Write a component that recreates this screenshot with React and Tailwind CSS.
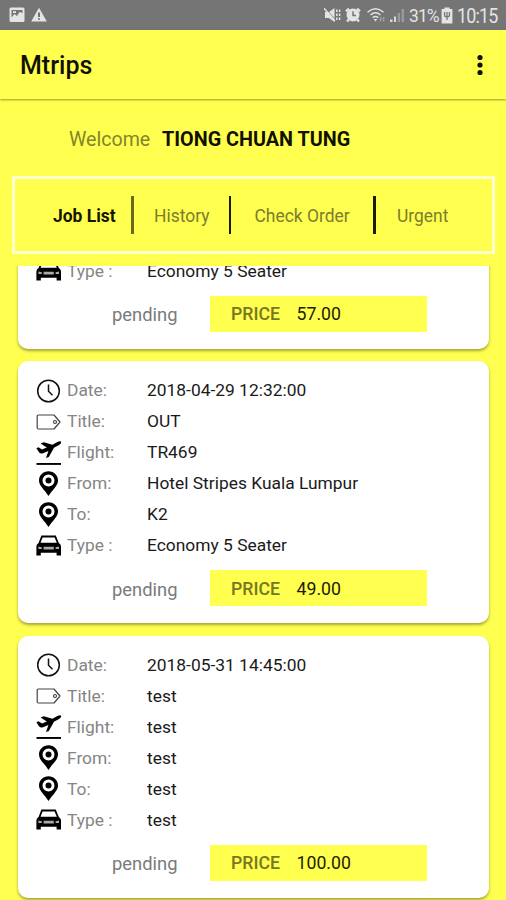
// src/App.jsx
import React from "react";

const jobs = [
  {
    id: 1,
    type: "Economy 5 Seater",
    price: "57.00",
  },
  {
    id: 2,
    date: "2018-04-29 12:32:00",
    title: "OUT",
    flight: "TR469",
    from: "Hotel Stripes Kuala Lumpur",
    to: "K2",
    type: "Economy 5 Seater",
    price: "49.00",
  },
  {
    id: 3,
    date: "2018-05-31 14:45:00",
    title: "test",
    flight: "test",
    from: "test",
    to: "test",
    type: "test",
    price: "100.00",
  },
];

function ClockIcon() {
  return (
    <svg width="26" height="26" viewBox="0 0 26 26" fill="none" stroke="#111" strokeWidth="1.5">
      <circle cx="12.5" cy="13" r="10.8" />
      <path d="M12.5 6.5V13.2l4 4" />
    </svg>
  );
}

function TagIcon() {
  return (
    <svg width="26" height="26" viewBox="0 0 26 26" fill="none" stroke="#444" strokeWidth="1.2">
      <path d="M2.4 6H18L24 13L18 20H2.4Q1.2 20 1.2 18.8V7.2Q1.2 6 2.4 6Z" strokeLinejoin="round" />
      <circle cx="19" cy="13" r="1.5" />
    </svg>
  );
}

function PlaneIcon() {
  return (
    <svg width="26" height="26" viewBox="0 0 26 26" fill="#000">
      <path d="M.4 8.2L2.4 7.2L6 9.6L10.8 7.6L4.6 3.4L7.8 2.2L16.4 4.8L21.4 2Q24.4 .6 25.2 1.8Q25.5 3.6 23 5L18 7.8L12.8 17L10 18L12.4 11L7 13.2Q4.5 14 3.2 12.4Z" />
      <rect x=".5" y="23" width="24.5" height="1.9" />
    </svg>
  );
}

function PinIcon() {
  return (
    <svg width="26" height="26" viewBox="0 0 26 26" fill="#000">
      <path
        fillRule="evenodd"
        d="M12.5 .2C7.2 .2 3 4.2 3 9.4C3 15 8.4 18.2 12.5 25C16.6 18.2 22 15 22 9.4C22 4.2 17.8 .2 12.5 .2ZM12.5 3.6A6 6 0 1 1 12.5 15.6A6 6 0 1 1 12.5 3.6Z"
      />
      <circle cx="12.5" cy="9.6" r="3" />
    </svg>
  );
}

function CarIcon() {
  return (
    <svg width="26" height="26" viewBox="0 0 26 26">
      <path d="M5.4 2.6H19.8L22.8 10Q25 11 25 13.6V22.6H20.6V19.8H4.8V22.6H.4V13.6Q.4 11 2.6 10Z" fill="#000" />
      <path d="M6.6 4.6H18.6L20.8 9.8H4.5Z" fill="#fff" />
      <path d="M7.6 13.8H17.8V16.6H7.6ZM2.4 13.5L5.8 14.2V16H2.4ZM23 13.5L19.6 14.2V16H23Z" fill="#aaa" />
    </svg>
  );
}

function Row({ icon, label, value }) {
  return (
    <div className="flex h-[31px] items-center">
      <div className="w-[31px] shrink-0">{icon}</div>
      <div className="w-20 shrink-0 text-[#858585]">{label}</div>
      <div className="whitespace-nowrap text-[#1a1a1a]">{value}</div>
    </div>
  );
}

function JobCard({ job }) {
  return (
    <div className="shrink-0 rounded-[10px] bg-white pt-3.5 pb-[17px] pl-[18px] text-[17.4px] shadow-[0_2px_3px_rgba(0,0,0,0.35)]">
      {job.date && <Row icon={<ClockIcon />} label="Date:" value={job.date} />}
      {job.title && <Row icon={<TagIcon />} label="Title:" value={job.title} />}
      {job.flight && <Row icon={<PlaneIcon />} label="Flight:" value={job.flight} />}
      {job.from && <Row icon={<PinIcon />} label="From:" value={job.from} />}
      {job.to && <Row icon={<PinIcon />} label="To:" value={job.to} />}
      <Row icon={<CarIcon />} label="Type :" value={job.type} />
      <div className="mt-[9px] flex h-9 items-center pl-[76px]">
        <div className="w-[98px] pt-[3px] text-[18.4px] text-[#7a7a7a]">pending</div>
        <div className="flex h-full w-[217px] items-center bg-[#ffff4f] pt-0.5 pl-[21px] text-[17.7px]">
          <span className="w-[65.5px] font-medium text-[#77771f]">PRICE</span>
          <span className="text-[#1c1c00]">{job.price}</span>
        </div>
      </div>
    </div>
  );
}

function StatusBar() {
  return (
    <div className="flex h-[30px] shrink-0 items-center justify-between bg-[#757575] pr-[9px] pl-[9px] text-[#e4e4e4]">
      <div className="flex items-center gap-1.5">
        {/* picture */}
        <svg width="16" height="16" viewBox="0 0 16 16">
          <rect x=".5" y=".5" width="15" height="14.5" rx="1.5" fill="#e4e4e4" />
          <path d="M2.5 3H13.5V6L10.5 5L8 9L5.5 7L2.5 10.5Z" fill="#757575" />
          <path d="M4 4.2H7V6H4Z" fill="#e4e4e4" />
        </svg>
        {/* warning */}
        <svg width="16" height="16" viewBox="0 0 16 16">
          <path d="M8 .8L15.8 14.5H.2Z" fill="#e4e4e4" />
          <path d="M7.2 5.5H8.8V10H7.2ZM7.2 11.2H8.8V12.8H7.2Z" fill="#555" />
        </svg>
      </div>
      <div className="flex items-center">
        {/* muted, vibrate */}
        <svg className="-ml-1" width="17" height="16" viewBox="0 0 17 16" fill="#e4e4e4">
          <path d="M1 5H5L10.5 1V15L5 11H1Z" />
          <path d="M1.2 .8L11.7 13.2" stroke="#757575" strokeWidth=".8" />
          <path d="M0 1.2L10.8 14" stroke="#e4e4e4" strokeWidth="1.5" />
          <path d="M12.8 2.5V13.5M15.6 2.5V13.5" fill="none" stroke="#e4e4e4" strokeWidth="1.5" strokeDasharray="2.4 1.6" />
        </svg>
        {/* alarm */}
        <svg className="ml-1" width="16" height="16" viewBox="0 0 16 16">
          <path d="M1 4.4L4 1.6M15 4.4L12 1.6M3.6 12.5L2.2 14.6M12.4 12.5L13.8 14.6" stroke="#e4e4e4" strokeWidth="2.4" />
          <circle cx="8" cy="8" r="6.5" fill="#e4e4e4" />
          <path d="M8 4.2V8.6H11" fill="none" stroke="#757575" strokeWidth="1.5" />
        </svg>
        {/* wifi */}
        <svg className="ml-1.5" width="20" height="16" viewBox="0 0 20 16" fill="none" stroke="#e4e4e4" strokeWidth="1.5">
          <path d="M.5 5.2Q8.5 -1.6 16.5 5.2M3.5 8Q8.5 3.6 13.5 8M5.8 10.6Q8.5 8.4 11.2 10.6" />
          <path d="M6.7 12H10.3L8.5 14.6Z" fill="#e4e4e4" stroke="none" />
          <path d="M13.6 10V14.4M16.6 10V14.4" stroke="#a0a0a0" />
        </svg>
        {/* signal */}
        <svg className="ml-0.5" width="16" height="16" viewBox="0 0 16 16">
          <path d="M1 12.5H3.5V15H1ZM5 9.5H7V15H5Z" fill="#d8d8d8" />
          <path d="M8.7 6H11V15H8.7ZM12.6 2H15V15H12.6Z" fill="#9a9a9a" />
        </svg>
        <span className="ml-1 inline-block w-8 origin-left scale-x-[0.92] pt-[3px] text-[19px] tracking-[-1px]">31%</span>
        {/* battery */}
        <svg width="12" height="17" viewBox="0 0 12 17">
          <path d="M3.4 .5H8.6V2H11.4V16.5H.6V2H3.4Z" fill="#e4e4e4" />
          <path d="M3.6 5V8.4Q3.6 9.6 6 9.6T8.4 8.4V5M6 5V13" fill="none" stroke="#757575" strokeWidth="1.3" />
        </svg>
        <span className="ml-1 inline-block w-10 origin-left scale-x-[0.92] pt-[3px] text-[19.5px] tracking-[-0.9px]">10:15</span>
      </div>
    </div>
  );
}

function Tabs() {
  return (
    <div className="mr-[11px] ml-3 mt-[23px] flex h-[78px] shrink-0 items-center border-[3px] border-[#ffffd0] pl-[38px] text-[17.45px] text-[#7c7c2c]">
      <span className="w-[78px] pt-0.5 font-bold text-[#151500]">Job List</span>
      <span className="h-[38px] w-[3px] bg-[#6a6a18]"></span>
      <span className="w-[94.5px] pt-0.5 pl-5">History</span>
      <span className="h-[38px] w-[2.5px] bg-[#1c1c00]"></span>
      <span className="w-[142px] pt-0.5 pl-[23.5px]">Check Order</span>
      <span className="h-[38px] w-[2.5px] bg-[#1c1c00]"></span>
      <span className="pt-0.5 pl-[21.5px]">Urgent</span>
    </div>
  );
}

export default function App() {
  return (
    <div className="flex h-[900px] w-[506px] flex-col overflow-hidden bg-[#ffff4f] font-['Roboto',sans-serif]">
      <StatusBar />

      {/* Title bar */}
      <div className="flex h-[69px] shrink-0 items-center justify-between pr-[22px] pl-[20px] shadow-[0_1px_2px_rgba(0,0,0,0.4)]">
        <h1 className="pt-[3px] text-[25px] font-medium text-[#111100]">Mtrips</h1>
        <svg width="8" height="24" viewBox="0 0 8 24" fill="#111100">
          <circle cx="4" cy="4.5" r="2.6" />
          <circle cx="4" cy="12" r="2.6" />
          <circle cx="4" cy="19.5" r="2.6" />
        </svg>
      </div>

      {/* Welcome */}
      <div className="mt-[26px] flex h-7 shrink-0 items-center pt-px pl-[69px]">
        <span className="w-[93px] text-[19.6px] text-[#84842c]">Welcome</span>
        <span className="text-[19.8px] font-bold text-[#111100]">TIONG CHUAN TUNG</span>
      </div>

      <Tabs />

      {/* Job list, scrolled down */}
      <div className="mt-3 min-h-0 flex-1 overflow-hidden pr-[17px] pl-[18px]">
        <div className="-mt-[24.5px] flex flex-col gap-[12.5px]">
          {jobs.map((job) => (
            <JobCard key={job.id} job={job} />
          ))}
        </div>
      </div>
    </div>
  );
}
